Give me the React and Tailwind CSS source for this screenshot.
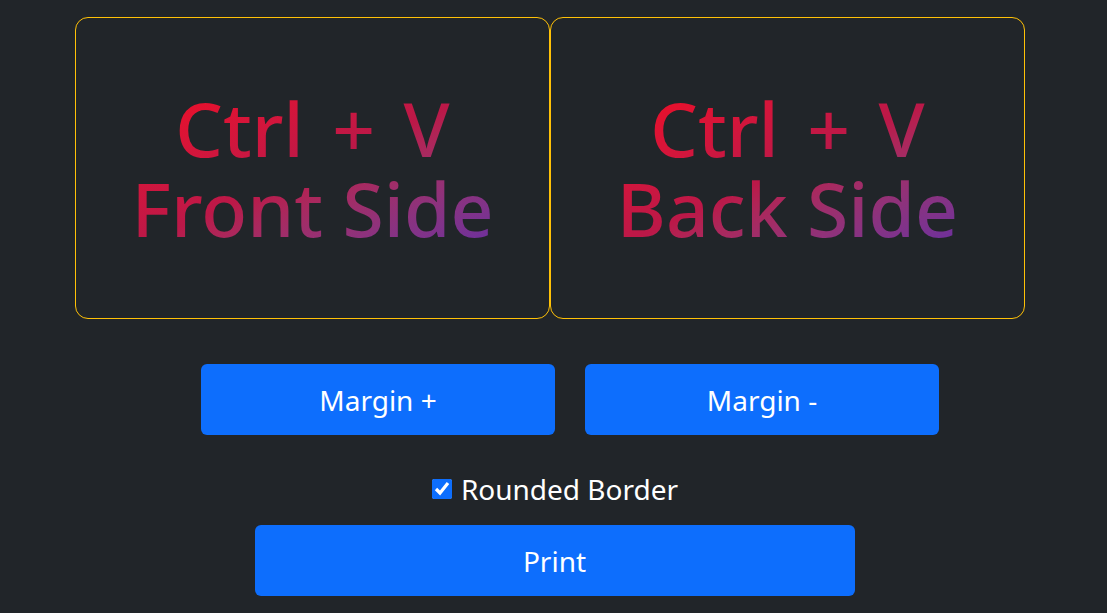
export default function App() {
  const font = { fontFamily: '"Noto Sans", "Open Sans", sans-serif' };
  const Card = ({ label }) => (
    <div className="w-[475px] h-[302px] border border-[#ffc107] rounded-[13px] flex items-center justify-center">
      <div
        className="text-center font-medium text-[75px] leading-[80px] bg-gradient-to-br from-[#f5081a] via-[#bb1848] to-[#6a2ea0] bg-clip-text text-transparent blur-[0.4px]"
        style={font}
      >
        <div className="[word-spacing:9px]">Ctrl + V</div>
        <div>{label}</div>
      </div>
    </div>
  );
  return (
    <div className="w-[1107px] h-[613px] bg-[#212529] text-white overflow-hidden" style={font}>
      <div className="pt-[17px] flex justify-center pr-[7px]">
        <Card label="Front Side" />
        <Card label="Back Side" />
      </div>
      <div className="mt-[45px] flex justify-center gap-[30px] pl-[33px]">
        <button className="w-[354px] h-[71px] bg-[#0d6efd] rounded-[6px] text-[28px] text-white">Margin +</button>
        <button className="w-[354px] h-[71px] bg-[#0d6efd] rounded-[6px] text-[28px] text-white">Margin -</button>
      </div>
      <div className="mt-[36px] flex justify-center items-center gap-[9px] h-[36px] pl-[3px]">
        <input type="checkbox" defaultChecked className="w-[20px] h-[20px] accent-[#0d6efd]" />
        <span className="text-[28px] leading-none">Rounded Border</span>
      </div>
      <div className="mt-[18px] flex justify-center pl-[2px]">
        <button className="w-[600px] h-[71px] bg-[#0d6efd] rounded-[6px] text-[28px] text-white">Print</button>
      </div>
    </div>
  );
}
